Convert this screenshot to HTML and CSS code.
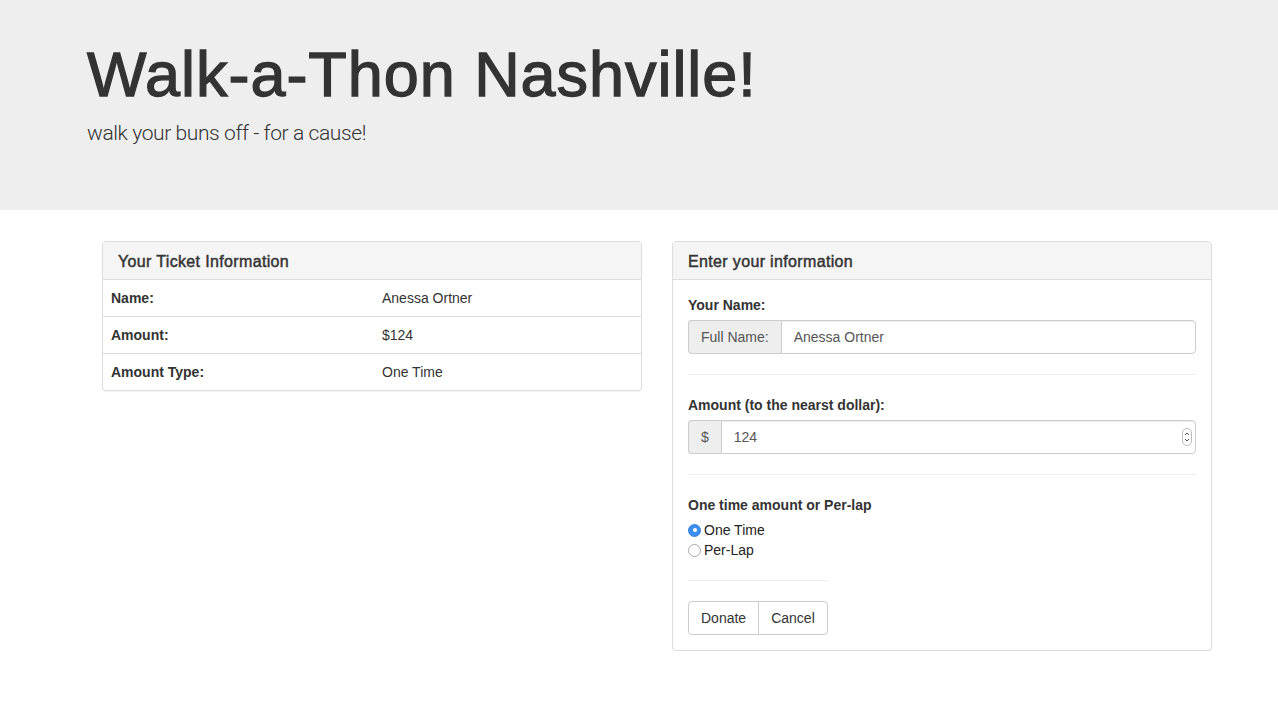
FILE: index.html
```html
<!DOCTYPE html>
<html>
<head>
<meta charset="utf-8">
<link rel="stylesheet" href="styles.css">
</head>
<body>
<header class="jumbotron">
  <h1 class="title">Walk-a-Thon Nashville!</h1>
  <p class="subtitle">walk your buns off - for a cause!</p>
</header>
<main class="row">
  <section class="panel">
    <div class="panel-heading">Your Ticket Information</div>
    <table class="info-table">
      <tr><th class="label-col">Name:</th><td>Anessa Ortner</td></tr>
      <tr><th class="label-col">Amount:</th><td>$124</td></tr>
      <tr><th class="label-col">Amount Type:</th><td>One Time</td></tr>
    </table>
  </section>
  <section class="panel">
    <div class="panel-heading">Enter your information</div>
    <form class="panel-body">
      <label class="field-label">Your Name:</label>
      <div class="input-group">
        <span class="addon">Full Name:</span>
        <input class="control" type="text" value="Anessa Ortner">
      </div>
      <hr class="sep">
      <label class="field-label">Amount (to the nearst dollar):</label>
      <div class="input-group">
        <span class="addon">$</span>
        <div class="number-wrap">
          <input class="control" type="text" value="124">
          <svg class="spinner" width="10" height="18" viewBox="0 0 10 18">
            <rect x="0.5" y="0.5" width="9" height="17" rx="4.5" fill="#fff" stroke="#bbb"/>
            <path d="M3 7 L5 5 L7 7" fill="none" stroke="#555" stroke-width="1"/>
            <path d="M3 11 L5 13 L7 11" fill="none" stroke="#555" stroke-width="1"/>
          </svg>
        </div>
      </div>
      <hr class="sep">
      <label class="field-label">One time amount or Per-lap</label>
      <div class="radios">
        <label class="radio"><span class="dot checked"></span>One Time</label>
        <label class="radio"><span class="dot"></span>Per-Lap</label>
      </div>
      <div class="actions">
        <hr class="sep short">
        <div class="btn-group">
          <button type="button" class="btn">Donate</button>
          <button type="button" class="btn">Cancel</button>
        </div>
      </div>
    </form>
  </section>
</main>
</body>
</html>
```
FILE: styles.css
```css
* { box-sizing: border-box; }
html, body { margin: 0; padding: 0; }
body {
  font-family: "Liberation Sans", Arial, Helvetica, sans-serif;
  font-size: 14px;
  line-height: 20px;
  color: #333;
  background: #fff;
}
.jumbotron {
  background: #eee;
  height: 210px;
  padding: 40px 0 0 87px;
}
.title {
  margin: 0 0 9px;
  font-size: 63px;
  line-height: 69px;
  font-weight: normal;
  color: #333;
  letter-spacing: 0.95px;
  -webkit-text-stroke: 1.3px #333;
}
.subtitle {
  margin: 0;
  font-family: Roboto, "Liberation Sans", sans-serif;
  font-size: 21px;
  line-height: 30px;
  font-weight: 300;
  color: #333;
  letter-spacing: -0.4px;
}
.row {
  display: flex;
  align-items: flex-start;
  gap: 30px;
  padding: 31px 0 0 102px;
}
.panel {
  width: 540px;
  border: 1px solid #ddd;
  border-radius: 4px;
  background: #fff;
  box-shadow: 0 1px 1px rgba(0,0,0,0.05);
  overflow: hidden;
}
.panel-heading {
  background: #f5f5f5;
  border-bottom: 1px solid #ddd;
  padding: 11px 15px 8px;
  font-size: 16px;
  line-height: 18px;
  height: 38px;
  color: #333;
  letter-spacing: 0.35px;
  -webkit-text-stroke: 0.45px #333;
}
.info-table {
  width: 100%;
  border-collapse: collapse;
}
.info-table th, .info-table td {
  padding: 8px;
  line-height: 20px;
  text-align: left;
  vertical-align: top;
}
.info-table tr + tr th, .info-table tr + tr td {
  border-top: 1px solid #ddd;
}
.label-col {
  width: 271px;
  font-weight: bold;
}
.panel-body {
  padding: 15px;
}
.field-label {
  display: block;
  font-weight: bold;
  margin-bottom: 5px;
}
.input-group {
  display: flex;
  height: 34px;
}
.addon {
  background: #eee;
  border: 1px solid #ccc;
  border-right: 0;
  border-radius: 4px 0 0 4px;
  padding: 6px 12px;
  color: #555;
  line-height: 20px;
  white-space: nowrap;
}
.control {
  flex: 1;
  min-width: 0;
  height: 34px;
  border: 1px solid #ccc;
  border-radius: 0 4px 4px 0;
  padding: 6px 12px;
  font: inherit;
  color: #555;
  background: #fff;
  box-shadow: inset 0 1px 1px rgba(0,0,0,0.075);
  outline: none;
}
.number-wrap {
  flex: 1;
  display: flex;
  position: relative;
}
.spinner {
  position: absolute;
  right: 4px;
  top: 8px;
}
.sep {
  border: 0;
  border-top: 1px solid #eee;
  margin: 20px 0;
}
.radios {
  display: flex;
  flex-direction: column;
}
.radio {
  display: flex;
  align-items: center;
  height: 20px;
  gap: 3px;
  color: #222;
}
.dot {
  width: 13px;
  height: 13px;
  border-radius: 50%;
  border: 1px solid #aaa;
  background: #fff;
  position: relative;
}
.dot.checked {
  background: #3b8df0;
  border-color: #3583e6;
}
.dot.checked::after {
  content: "";
  position: absolute;
  width: 4px;
  height: 4px;
  border-radius: 50%;
  background: #fff;
  left: 3.5px;
  top: 3.5px;
}
.actions {
  display: inline-block;
}
.sep.short {
  width: 140px;
}
.btn-group {
  display: flex;
}
.btn {
  font: inherit;
  color: #333;
  background: #fff;
  border: 1px solid #ccc;
  padding: 6px 12px;
  line-height: 20px;
  height: 34px;
  cursor: pointer;
}
.btn:first-child {
  border-radius: 4px 0 0 4px;
}
.btn + .btn {
  margin-left: -1px;
  border-radius: 0 4px 4px 0;
}
```
